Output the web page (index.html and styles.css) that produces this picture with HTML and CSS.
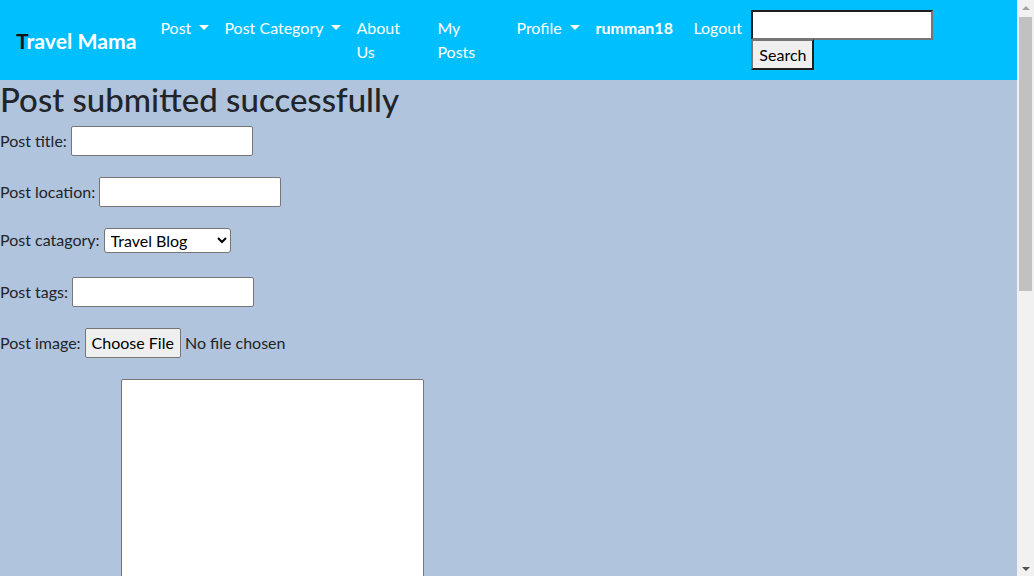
FILE: index.html
```html
<!DOCTYPE html>
<html lang="en">
<head>
<meta charset="utf-8">
<title>Travel Mama</title>
<link rel="stylesheet" href="styles.css">
</head>
<body>
<nav class="navbar">
  <a class="brand" href="#">Travel Mama</a>
  <ul class="nav">
    <li class="item w-post"><a class="nav-link toggle" href="#">Post</a></li>
    <li class="item w-cat"><a class="nav-link toggle" href="#">Post Category</a></li>
    <li class="item w-about"><a class="nav-link" href="#">About Us</a></li>
    <li class="item w-my"><a class="nav-link" href="#">My Posts</a></li>
    <li class="item w-profile"><a class="nav-link toggle" href="#">Profile</a></li>
    <li class="item w-user"><a class="nav-link user" href="#">rumman18</a></li>
    <li class="item w-logout"><a class="nav-link" href="#">Logout</a></li>
  </ul>
  <form class="search">
    <input class="search-input" type="search" aria-label="Search">
    <button class="search-btn" type="button">Search</button>
  </form>
</nav>

<main class="page">
  <h1 class="title">Post submitted successfully</h1>
  <form class="post-form">
    <div class="row"><label for="t">Post title:</label><input id="t" class="field" type="text"></div>
    <div class="row"><label for="l">Post location:</label><input id="l" class="field" type="text"></div>
    <div class="row row-select"><label for="c">Post catagory:</label>
      <select id="c" class="select">
        <option>Travel Blog</option>
        <option>Food Blog</option>
      </select>
    </div>
    <div class="row"><label for="g">Post tags:</label><input id="g" class="field" type="text"></div>
    <div class="row"><label for="i">Post image:</label><input id="i" class="file" type="file"></div>
    <div class="row row-area"><textarea class="area" aria-label="Post description"></textarea></div>
  </form>
</main>

<div class="scrollbar" aria-hidden="true">
  <span class="sb-btn"><span class="tri tri-up"></span></span>
  <span class="sb-thumb"></span>
  <span class="sb-track"></span>
  <span class="sb-btn"><span class="tri tri-down"></span></span>
</div>
</body>
</html>
```

FILE: styles.css
```css
* { box-sizing: border-box; }

html, body {
  margin: 0;
  padding: 0;
}

body {
  background: #b0c4de;
  color: #212529;
  font-family: "Lato", "Liberation Sans", sans-serif;
  font-size: 16px;
  line-height: 1.5;
  padding-right: 17px;
}

.navbar {
  display: flex;
  align-items: center;
  background: #00bfff;
  padding: 8px 16px;
  min-height: 80px;
}

.brand {
  font-size: 21.2px;
  font-weight: 700;
  line-height: 30px;
  padding: 6px 0 4px;
  margin-right: 16px;
  color: #fff;
  text-decoration: none;
  white-space: nowrap;
}
.brand::first-letter { color: #111; }

.nav {
  display: flex;
  align-items: flex-start;
  list-style: none;
  margin: 0;
  padding: 0;
  align-self: flex-start;
}

.item { flex: none; }
.w-post { width: 64px; }
.w-cat { width: 132px; }
.w-about { width: 81px; }
.w-my { width: 79px; }
.w-profile { width: 79px; }
.w-user { width: 98px; }
.w-logout { width: 66px; }

.nav-link {
  display: block;
  padding: 8px;
  color: #fff;
  text-decoration: none;
  white-space: normal;
}
.toggle { white-space: nowrap; }
.toggle::after {
  content: "";
  display: inline-block;
  margin-left: 8px;
  vertical-align: 4px;
  border-top: 5px solid #fff;
  border-left: 5px solid transparent;
  border-right: 5px solid transparent;
}
.w-about .nav-link { width: 60px; }
.w-my .nav-link { width: 60px; }
.user { font-weight: 700; white-space: nowrap; }

.search {
  display: flex;
  flex-wrap: wrap;
  width: 182px;
}
.search-input {
  -webkit-appearance: none;
  appearance: none;
  width: 182px;
  height: 30px;
  background: #fff;
  border: 2px solid;
  border-color: #1f1f1f #767676 #767676 #1f1f1f;
  padding: 1px 2px;
  font: inherit;
}
.search-btn {
  height: 31px;
  width: 63px;
  margin-top: -1px;
  background: #efefef;
  border: 2px solid;
  border-color: #767676 #1f1f1f #1f1f1f #767676;
  padding: 0 5px;
  font: inherit;
  color: #000;
  line-height: 24px;
}

.page { padding: 0; }

.title {
  font-size: 33px;
  font-weight: 500;
  line-height: 39px;
  margin: 0 0 6px;
}

.post-form {
  display: flex;
  flex-direction: column;
  gap: 21px;
  padding-top: 1px;
  padding-bottom: 40px;
}

.row {
  display: flex;
  align-items: center;
  gap: 4px;
  height: 30px;
}
.row-select { height: 28px; align-items: flex-start; }
.row-area { height: auto; padding-left: 121px; }

.field {
  width: 182px;
  height: 30px;
  background: #fff;
  border: 1px solid #767676;
  border-radius: 2px;
  padding: 1px 3px;
  font: inherit;
}

.select {
  width: 127px;
  height: 25px;
  border: 1px solid #767676;
  border-radius: 3px;
  background: #fff;
  color: #000;
  font: inherit;
  line-height: 20px;
  padding: 0 2px;
}

.file {
  font: inherit;
  color: #212529;
}
.file::file-selector-button {
  font: inherit;
  height: 30px;
  padding: 2px 6px;
  margin-right: 4px;
  background: #efefef;
  border: 1px solid #767676;
  border-radius: 2px;
  color: #000;
}

.area {
  width: 303px;
  height: 420px;
  background: #fff;
  border: 1px solid #767676;
  border-radius: 2px;
  resize: both;
  font: inherit;
}

/* browser scrollbar as it appears in the capture */
.scrollbar {
  position: fixed;
  top: 0;
  right: 0;
  bottom: 0;
  width: 17px;
  background: #f1f1f1;
  display: flex;
  flex-direction: column;
}
.sb-btn {
  flex: none;
  height: 17px;
  display: flex;
  align-items: center;
  justify-content: center;
}
.sb-thumb {
  flex: none;
  height: 274px;
  margin: 0 2px;
  background: #c1c1c1;
}
.sb-track { flex: 1; }
.tri {
  width: 0;
  height: 0;
  border-left: 4px solid transparent;
  border-right: 4px solid transparent;
}
.tri-up { border-bottom: 4px solid #a3a3a3; margin-top: -1px; }
.tri-down { border-top: 4px solid #505050; margin-bottom: -2px; }
```
